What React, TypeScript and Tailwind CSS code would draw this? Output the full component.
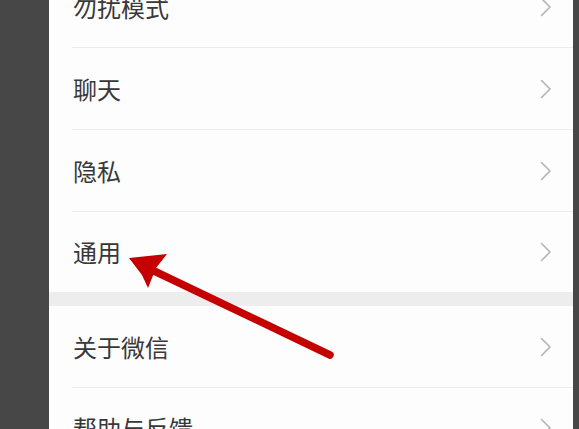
const groups = [
  ["勿扰模式", "聊天", "隐私", "通用"],
  ["关于微信", "帮助与反馈"],
];

const Chevron = () => (
  <svg width="12" height="20" viewBox="0 0 12 20" fill="none" aria-hidden="true">
    <path d="M1.5 1.5 L10 10 L1.5 18.5" stroke="#b4b4b4" strokeWidth="1.6" strokeLinecap="round" strokeLinejoin="round" />
  </svg>
);

const App = () => {
  return (
    <div
      className="relative flex w-[579px] h-[429px] overflow-hidden bg-[#474747]"
      style={{ fontFamily: '"Noto Sans CJK SC", "Noto Sans", sans-serif' }}
    >
      {/* left shade */}
      <div className="w-[49px] shrink-0 bg-[#474747]" />

      {/* settings panel */}
      <div className="flex-1 bg-[#fdfdfd] flex flex-col -mt-[34px]">
        {groups.map((items, gi) => (
          <div key={gi}>
            {gi > 0 && <div className="h-[14px] bg-[#ededed]" />}
            {items.map((label, i) => {
              const last = i === items.length - 1;
              return (
                <div key={label} className="pl-[23px]">
                  <div
                    className={`${
                      last ? "h-[80px]" : "h-[82px] border-b border-[#ececec]"
                    } flex items-center justify-between pl-[1px] pr-[21px]`}
                  >
                    <span className="text-[24px] leading-none text-[#383838]">{label}</span>
                    <Chevron />
                  </div>
                </div>
              );
            })}
          </div>
        ))}
      </div>

      {/* right shade */}
      <div className="w-[6px] shrink-0 bg-[#474747]" />

      {/* red annotation arrow */}
      <svg
        className="absolute inset-0 pointer-events-none"
        width="579"
        height="429"
        viewBox="0 0 579 429"
        aria-hidden="true"
      >
        <line x1="152" y1="270" x2="330" y2="355" stroke="#c40000" strokeWidth="7.5" strokeLinecap="round" />
        <path d="M129 258 L167 254 L156 268 L148 288 L142 275 Z" fill="#c40000" />
      </svg>
    </div>
  );
};

export default App;
